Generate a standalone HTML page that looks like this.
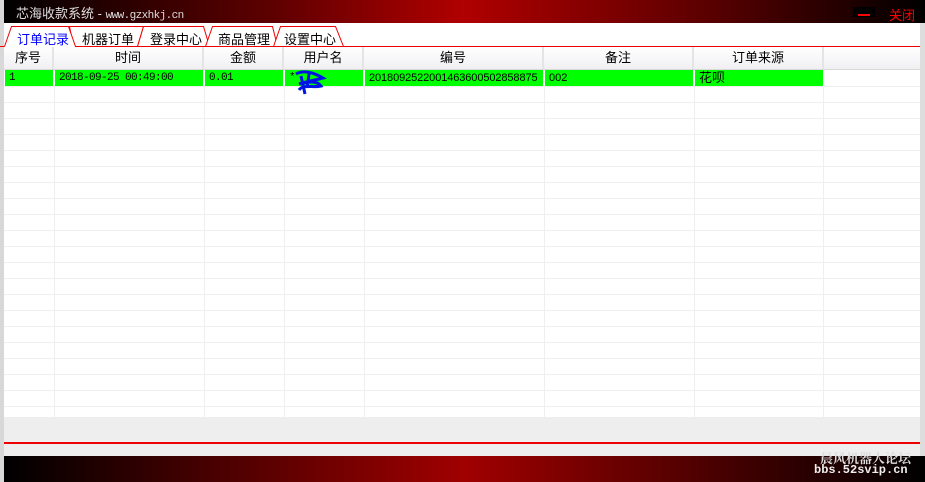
<!DOCTYPE html><html><head><meta charset="utf-8"><style>
body{margin:0;width:925px;height:482px;overflow:hidden;background:#fff;position:relative;font-family:"Liberation Sans","Noto Sans CJK SC","WenQuanYi Zen Hei",sans-serif;}
div{position:absolute;box-sizing:border-box}
.t{font-size:12px;color:#000;white-space:nowrap}
.h{top:47px;height:22px;background:linear-gradient(#fff,#f0f0f3);border-right:2px solid #e4e4e4;font-size:13px;text-align:center;line-height:22px}
.g{top:70px;height:16px;background:#00ff00;font-size:11px;letter-spacing:-0.6px;line-height:16px;padding-left:4px;font-family:"Liberation Mono","Noto Sans CJK SC",monospace;overflow:hidden}
</style></head><body>
<div style="left:0;top:0;width:925px;height:23px;background:linear-gradient(90deg,#000 0%,#600000 30%,#b00000 50%,#600000 75%,#000 100%)"></div>
<div class="t" style="left:16px;top:3px;color:#ddd;font-size:13px">芯海收款系统 - <span style="font-family:'Liberation Mono',monospace;font-size:11px;letter-spacing:-0.6px">www.gzxhkj.cn</span></div>
<div style="left:853px;top:7px;width:22px;height:10px;background:#000"></div>
<div style="left:858px;top:14px;width:12px;height:2px;background:#f00"></div>
<div class="t" style="left:889px;top:5px;color:#f00;font-size:13px">关闭</div>
<div style="left:0;top:0;width:4px;height:482px;background:#d8d8d8"></div>
<svg style="position:absolute;left:0;top:0" width="925" height="60">
<g fill="#fff" stroke="#e00" stroke-width="1">
<path d="M73.5,46.5 L69.5,26.5 L143.5,26.5 L137.5,46.5"/>
<path d="M137.5,46.5 L143.5,26.5 L203.5,26.5 L209.5,46.5"/>
<path d="M205.5,46.5 L212.5,26.5 L272.5,26.5 L277.5,46.5"/>
<path d="M273.5,46.5 L280.5,26.5 L335.5,26.5 L343.5,46.5"/>
<path d="M4.5,46.5 L11.5,26.5 L68.5,26.5 L75.5,46.5"/>
</g>
<path d="M0,46.5 H4.5 M75,46.5 H925" stroke="#e00"/>
</svg>
<div class="t" style="left:17px;top:29px;color:#00f;font-size:13px">订单记录</div>
<div class="t" style="left:82px;top:29px;font-size:13px">机器订单</div>
<div class="t" style="left:150px;top:29px;font-size:13px">登录中心</div>
<div class="t" style="left:218px;top:29px;font-size:13px">商品管理</div>
<div class="t" style="left:284px;top:29px;font-size:13px">设置中心</div>
<div style="left:4px;top:71px;width:916px;height:346px;background:repeating-linear-gradient(#fff 0 15px,#efefef 15px 16px)"></div>
<div style="left:4px;top:86px;width:820px;height:331px;background:
linear-gradient(90deg,transparent 50px,#efefef 50px 51px,transparent 51px 200px,#efefef 200px 201px,transparent 201px 280px,#efefef 280px 281px,transparent 281px 360px,#efefef 360px 361px,transparent 361px 540px,#efefef 540px 541px,transparent 541px 690px,#efefef 690px 691px,transparent 691px 819px,#efefef 819px)"></div>
<div class="h" style="left:4px;width:50px">序号</div>
<div class="h" style="left:54px;width:150px">时间</div>
<div class="h" style="left:204px;width:80px">金额</div>
<div class="h" style="left:284px;width:80px">用户名</div>
<div class="h" style="left:364px;width:180px">编号</div>
<div class="h" style="left:544px;width:150px">备注</div>
<div class="h" style="left:694px;width:130px">订单来源</div>
<div class="h" style="left:824px;width:96px;border-right:none"></div>
<div style="left:4px;top:69px;width:916px;height:1px;background:#d8d8d8"></div>
<div class="g" style="left:5px;width:48px">1</div>
<div class="g" style="left:55px;width:148px">2018-09-25 00:49:00</div>
<div class="g" style="left:205px;width:78px">0.01</div>
<div class="g" style="left:285px;width:78px">*</div>
<div class="g" style="left:365px;width:178px;font-family:'Liberation Sans',sans-serif;font-size:11px;letter-spacing:-0.1px">2018092522001463600502858875</div>
<div class="g" style="left:545px;width:148px;font-family:'Liberation Sans',sans-serif;font-size:11px;letter-spacing:0">002</div>
<div class="g" style="left:695px;width:128px;font-family:'Liberation Sans','Noto Sans CJK SC',sans-serif;font-size:13px;letter-spacing:0">花呗</div>
<svg style="position:absolute;left:293px;top:70px" width="36" height="26"><path d="M3,4 C10,0 20,2 30,8 C22,10 12,12 6,14 C14,12 24,10 28,16 C20,18 10,14 6,20 M8,6 L12,24 M16,4 L14,18" stroke="#0014e6" stroke-width="3" fill="none"/></svg>
<div style="left:4px;top:417px;width:916px;height:39px;background:#eee"></div>
<div style="left:4px;top:442px;width:916px;height:2px;background:#e00"></div>
<div style="left:920px;top:23px;width:5px;height:459px;background:#ddd"></div>
<div style="left:4px;top:456px;width:921px;height:26px;background:linear-gradient(90deg,#000 0%,#500000 25%,#a00000 50%,#500000 75%,#000 100%)"></div>
<div class="t" style="left:820px;top:450px;color:#ddd;font-size:13px;line-height:15px;font-weight:bold;font-family:'Noto Serif CJK SC',serif">晨风机器人论坛</div>
<div class="t" style="left:814px;top:463px;color:#eee;font-size:12px;line-height:15px;font-family:'Liberation Mono',monospace;font-weight:bold">bbs.52svip.cn</div>
</body></html>
